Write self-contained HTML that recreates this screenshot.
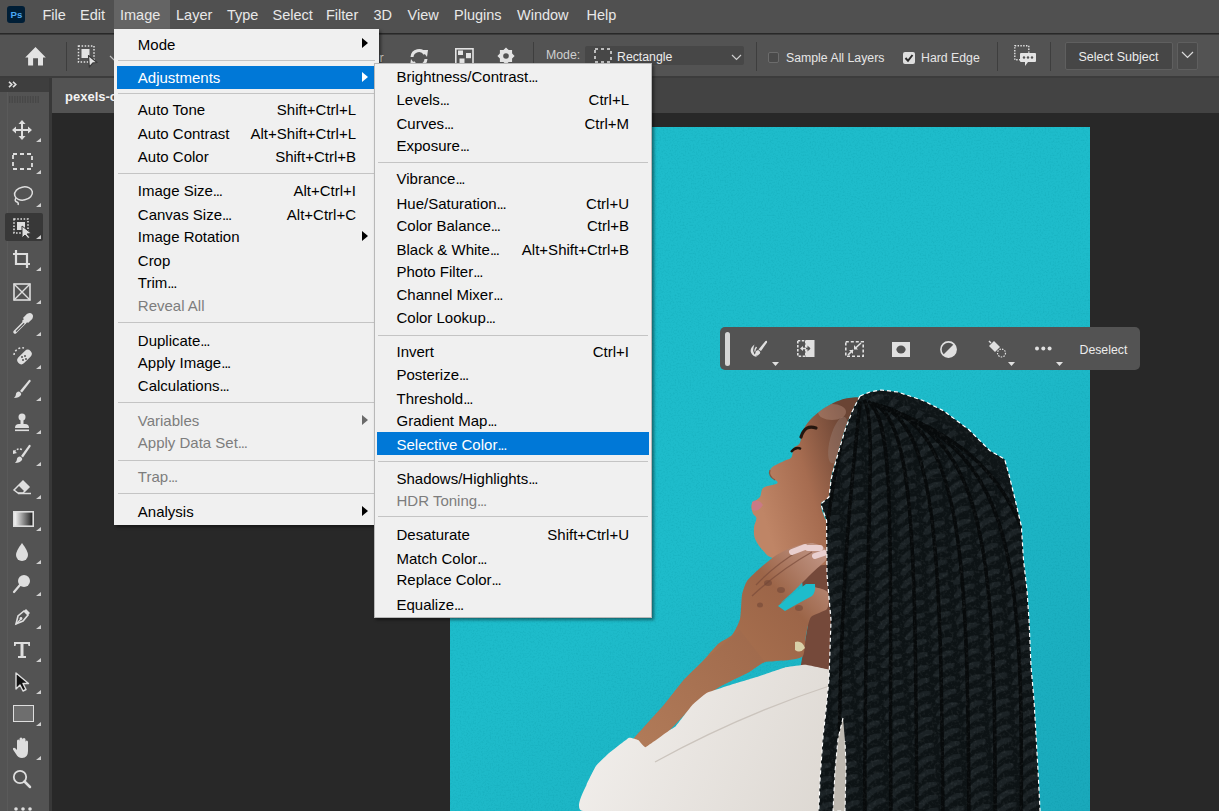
<!DOCTYPE html>
<html><head><meta charset="utf-8"><style>
html,body{margin:0;padding:0;width:1219px;height:811px;overflow:hidden;background:#282828;}
.r{position:absolute;display:block;}
.t{position:absolute;white-space:nowrap;font-family:"Liberation Sans",sans-serif;}
</style></head><body>
<div class="r" style="left:0px;top:0px;width:1219px;height:33px;background:#505050;"></div>
<div class="r" style="left:0px;top:33.5px;width:1219px;height:1.5px;background:#3b3b3b;"></div>
<div class="r" style="left:0px;top:35px;width:1219px;height:41px;background:#535353;"></div>
<div class="r" style="left:0px;top:76px;width:1219px;height:2px;background:#3c3c3c;"></div>
<div class="r" style="left:0px;top:78px;width:1219px;height:35px;background:#434343;"></div>
<div class="r" style="left:0px;top:113px;width:1219px;height:698px;background:#282828;"></div>
<div class="r" style="left:0px;top:78px;width:49px;height:14px;background:#3e3e3e;"></div>
<div class="r" style="left:0px;top:92px;width:49px;height:719px;background:#535353;"></div>
<div class="r" style="left:7px;top:92px;width:1px;height:719px;background:#5a5a5a;"></div>
<div class="r" style="left:49px;top:78px;width:3px;height:733px;background:#383838;"></div>
<div class="r" style="left:52px;top:78px;width:400px;height:35px;background:#535353;"></div>
<div class="t" style="left:65px;top:90.0px;font-size:13px;line-height:13px;color:#f2f2f2;font-weight:bold;">pexels-cottonbro-5952651.jpg</div>
<svg class="r" style="left:0;top:0" width="1219" height="811" viewBox="0 0 1219 811">
<defs>
<clipPath id="imgclip"><rect x="450" y="127" width="640" height="684"/></clipPath>
<clipPath id="faceclip"><path d="M859.0 397.6 C856.6 396.8 846.5 398.1 840.7 399.9 C834.9 401.6 829.4 404.8 824.3 408.1 C819.2 411.4 813.7 416.1 810.2 419.8 C806.7 423.5 805.0 426.4 803.2 430.3 C801.5 434.2 801.3 440.3 799.7 443.2 C798.1 446.1 795.2 445.5 793.8 447.9 C792.4 450.2 793.0 455.1 791.5 457.3 C790.0 459.5 787.8 459.1 784.5 460.8 C781.2 462.6 774.0 465.3 771.6 467.8 C769.2 470.3 769.4 473.5 770.4 476.0 C771.4 478.5 778.7 481.1 777.5 483.0 C776.3 484.9 766.3 485.4 763.4 487.7 C760.5 490.0 761.8 494.3 759.9 497.0 C758.0 499.7 752.9 501.4 751.7 504.1 C750.5 506.9 752.1 511.2 752.9 513.5 C753.7 515.8 756.2 515.8 756.4 518.1 C756.6 520.4 754.2 524.0 754.0 527.5 C753.8 531.0 753.6 535.3 755.2 539.2 C756.8 543.1 760.5 547.9 763.4 551.0 C766.3 554.1 766.7 556.2 772.8 558.0 C778.9 559.8 790.5 561.3 800.0 562.0 C809.5 562.7 824.8 569.0 830.0 562.0 C835.2 555.0 831.7 527.0 831.0 520.0 C830.3 513.0 827.7 522.7 826.0 520.0 C824.3 517.3 820.5 507.8 821.0 504.0 C821.5 500.2 827.3 501.3 829.0 497.0 C830.7 492.7 829.5 485.3 831.0 478.0 C832.5 470.7 835.7 461.2 838.0 453.0 C840.3 444.8 842.2 437.0 845.0 429.0 C847.8 421.0 852.7 410.2 855.0 405.0 C857.3 399.8 861.4 398.5 859.0 397.6 Z"/></clipPath>
<clipPath id="hairclip"><polygon points="860.0,396.0 870.0,392.0 881.0,390.0 897.7,392.0 922.9,400.5 943.9,411.0 969.0,429.8 979.5,440.3 990.0,450.8 1004.6,459.2 1008.8,473.9 1015.0,499.0 1021.4,526.3 1023.5,560.0 1027.0,590.0 1029.0,620.0 1031.0,666.0 1034.0,700.0 1036.0,735.0 1038.0,770.0 1041.0,830.0 818.0,830.0 820.0,780.0 823.0,737.0 826.0,710.0 829.0,679.0 831.0,620.0 827.0,575.0 826.6,520.5 820.8,504.0 829.0,497.0 831.3,478.3 838.3,452.6 845.4,429.2 852.0,412.0"/></clipPath>
<linearGradient id="skinF" x1="750" y1="470" x2="850" y2="440" gradientUnits="userSpaceOnUse"><stop offset="0" stop-color="#bf8566"/><stop offset="0.5" stop-color="#a66c50"/><stop offset="1" stop-color="#6a4434"/></linearGradient>
<linearGradient id="handG" x1="720" y1="660" x2="830" y2="560" gradientUnits="userSpaceOnUse"><stop offset="0" stop-color="#a9714f"/><stop offset="0.6" stop-color="#9c6548"/><stop offset="1" stop-color="#c09484"/></linearGradient>
<linearGradient id="armG" x1="640" y1="740" x2="760" y2="640" gradientUnits="userSpaceOnUse"><stop offset="0" stop-color="#b07a58"/><stop offset="1" stop-color="#a06a4c"/></linearGradient>
<linearGradient id="shirtG" x1="600" y1="700" x2="840" y2="811" gradientUnits="userSpaceOnUse"><stop offset="0" stop-color="#f1eeeb"/><stop offset="1" stop-color="#dcd7d1"/></linearGradient>
<pattern id="twist" width="26" height="13" patternUnits="userSpaceOnUse" patternTransform="rotate(-4)">
<rect width="26" height="13" fill="#0d1315"/>
<path d="M3 11 Q9 3 19 2" stroke="#1b2225" stroke-width="5.5" fill="none" stroke-linecap="round"/>
</pattern>
<filter id="noise" x="0" y="0" width="100%" height="100%">
<feTurbulence type="fractalNoise" baseFrequency="0.35" numOctaves="2" seed="3"/>
<feColorMatrix type="matrix" values="0 0 0 0 0.55  0 0 0 0 0.6  0 0 0 0 0.62  0 0 0 1.6 -0.75"/>
</filter>
<filter id="tnoise" x="0" y="0" width="100%" height="100%">
<feTurbulence type="fractalNoise" baseFrequency="0.6" numOctaves="2" seed="7"/>
<feColorMatrix type="matrix" values="0 0 0 0 0  0 0 0 0 0.25  0 0 0 0 0.3  0 0 0 1.2 -0.55"/>
</filter>
<linearGradient id="vig" x1="700" y1="300" x2="1090" y2="811" gradientUnits="userSpaceOnUse"><stop offset="0.3" stop-color="#003a60" stop-opacity="0"/><stop offset="1" stop-color="#003a60" stop-opacity="0.15"/></linearGradient>
</defs>
<g clip-path="url(#imgclip)">
<rect x="450" y="127" width="640" height="684" fill="#1ebccb"/>
<rect x="450" y="127" width="640" height="684" filter="url(#tnoise)" opacity="0.35"/>
<rect x="450" y="127" width="640" height="684" fill="url(#vig)"/>
<polygon points="798.0,552.0 832.0,552.0 834.0,670.0 800.0,670.0 808.0,625.0" fill="#75493a"/>
<path d="M859.0 397.6 C856.6 396.8 846.5 398.1 840.7 399.9 C834.9 401.6 829.4 404.8 824.3 408.1 C819.2 411.4 813.7 416.1 810.2 419.8 C806.7 423.5 805.0 426.4 803.2 430.3 C801.5 434.2 801.3 440.3 799.7 443.2 C798.1 446.1 795.2 445.5 793.8 447.9 C792.4 450.2 793.0 455.1 791.5 457.3 C790.0 459.5 787.8 459.1 784.5 460.8 C781.2 462.6 774.0 465.3 771.6 467.8 C769.2 470.3 769.4 473.5 770.4 476.0 C771.4 478.5 778.7 481.1 777.5 483.0 C776.3 484.9 766.3 485.4 763.4 487.7 C760.5 490.0 761.8 494.3 759.9 497.0 C758.0 499.7 752.9 501.4 751.7 504.1 C750.5 506.9 752.1 511.2 752.9 513.5 C753.7 515.8 756.2 515.8 756.4 518.1 C756.6 520.4 754.2 524.0 754.0 527.5 C753.8 531.0 753.6 535.3 755.2 539.2 C756.8 543.1 760.5 547.9 763.4 551.0 C766.3 554.1 766.7 556.2 772.8 558.0 C778.9 559.8 790.5 561.3 800.0 562.0 C809.5 562.7 824.8 569.0 830.0 562.0 C835.2 555.0 831.7 527.0 831.0 520.0 C830.3 513.0 827.7 522.7 826.0 520.0 C824.3 517.3 820.5 507.8 821.0 504.0 C821.5 500.2 827.3 501.3 829.0 497.0 C830.7 492.7 829.5 485.3 831.0 478.0 C832.5 470.7 835.7 461.2 838.0 453.0 C840.3 444.8 842.2 437.0 845.0 429.0 C847.8 421.0 852.7 410.2 855.0 405.0 C857.3 399.8 861.4 398.5 859.0 397.6 Z" fill="url(#skinF)"/>
<g clip-path="url(#faceclip)"><ellipse cx="838" cy="440" rx="8" ry="24" fill="#a08a80" opacity="0.35" transform="rotate(15 838 440)"/><ellipse cx="832" cy="412" rx="14" ry="8" fill="#c9a090" opacity="0.35"/></g>
<path d="M801 437 Q805 424 816 428" stroke="#24160f" stroke-width="3.2" fill="none" stroke-linecap="round"/>
<path d="M791 452 Q796 446 801 449" stroke="#1e120c" stroke-width="2.2" fill="none"/>
<path d="M752 502 Q758 498 763 505 Q758 513 752 510 Z" fill="#c97a85"/>
<path d="M770 470 Q768 476 775 480" stroke="#8a5640" stroke-width="1.2" fill="none"/>
<path d="M812.0 543.0 C809.8 542.9 802.4 544.4 800.0 545.0 C797.6 545.6 790.5 547.9 788.0 549.0 C785.5 550.1 777.9 554.0 775.0 556.0 C772.1 558.0 761.8 566.5 759.0 569.0 C756.2 571.5 748.7 578.4 747.0 581.0 C745.3 583.6 742.7 591.2 742.0 595.0 C741.3 598.8 741.0 615.0 740.0 619.0 C739.0 623.0 734.2 632.5 732.0 635.0 C729.8 637.5 721.0 641.3 718.0 644.0 C715.0 646.7 705.5 658.3 702.0 662.0 C698.5 665.7 686.8 676.7 683.0 681.0 C679.2 685.3 667.8 700.5 664.0 705.0 C660.2 709.5 648.4 722.0 645.0 726.0 C641.6 730.0 629.0 742.8 630.0 745.0 C631.0 747.2 651.1 749.4 655.0 748.0 C658.9 746.6 664.8 735.6 669.0 731.0 C673.2 726.4 691.8 706.5 697.0 702.0 C702.2 697.5 715.8 689.0 721.0 686.0 C726.2 683.0 744.6 674.4 749.0 672.0 C753.4 669.6 761.0 663.2 765.0 662.0 C769.0 660.8 785.2 660.6 789.0 660.0 C792.8 659.4 801.3 658.5 803.0 656.0 C804.7 653.5 805.2 638.9 806.0 635.0 C806.8 631.1 808.9 619.6 811.0 617.0 C813.1 614.4 825.2 611.3 827.0 609.0 C828.8 606.7 829.5 596.0 829.0 594.0 C828.5 592.0 824.4 589.7 822.0 589.0 C819.6 588.3 809.1 585.6 805.0 587.0 C800.9 588.4 782.0 602.7 781.0 603.0 C780.0 603.3 791.9 593.0 795.0 590.0 C798.1 587.0 808.9 576.0 812.0 573.0 C815.1 570.0 824.5 562.1 826.0 560.0 C827.5 557.9 827.4 553.4 827.0 552.0 C826.6 550.6 823.5 546.9 822.0 546.0 C820.5 545.1 814.2 543.1 812.0 543.0 Z" fill="url(#handG)"/>
<path d="M752 596 Q780 570 812 552 M756 585 Q775 565 800 550" stroke="#7a4c3a" stroke-width="1.3" fill="none" opacity="0.7"/><g fill="#6e4436" opacity="0.55"><ellipse cx="768" cy="583" rx="4" ry="3"/><ellipse cx="781" cy="590" rx="4" ry="3"/><ellipse cx="799" cy="608" rx="4" ry="3"/><ellipse cx="760" cy="605" rx="3" ry="2.5"/></g>
<path d="M702.0 662.0 C700.1 663.9 686.8 676.7 683.0 681.0 C679.2 685.3 667.8 700.5 664.0 705.0 C660.2 709.5 648.4 722.0 645.0 726.0 C641.6 730.0 629.0 742.8 630.0 745.0 C631.0 747.2 651.1 749.4 655.0 748.0 C658.9 746.6 664.8 735.6 669.0 731.0 C673.2 726.4 691.8 706.5 697.0 702.0 C702.2 697.5 715.8 689.0 721.0 686.0 C726.2 683.0 744.6 674.4 749.0 672.0 C753.4 669.6 761.0 663.2 765.0 662.0 C769.0 660.8 786.6 660.2 789.0 660.0  L765 662 L740 630 Z" fill="url(#armG)"/>
<path d="M778 606 Q792 594 806 584 L815 584 Q816 592 812 596 Q797 604 785 611 Z" fill="#1ebccb"/>
<path d="M792 552 L805 547 M808 548 L820 548 M815 556 L824 553" stroke="#e9cfcf" stroke-width="6" stroke-linecap="round"/>
<path d="M795 642 Q802 640 805 648 Q800 654 795 650 Z" fill="#d8d0a8"/>
<path d="M583.0 811.0 C572.5 810.0 586.0 786.7 586.5 784.9 C587.0 783.1 595.1 767.2 595.9 766.0 C596.7 764.8 606.4 755.3 607.7 754.2 C609.0 753.1 627.7 738.4 628.9 737.8 C630.1 737.2 637.6 739.7 638.3 740.1 C639.0 740.5 644.2 747.6 645.4 747.2 C646.6 746.8 667.7 731.5 668.9 730.7 C670.1 729.9 675.1 727.0 676.0 726.0 C676.9 725.0 691.3 706.1 692.5 704.8 C693.7 703.5 704.9 693.8 706.6 693.0 C708.3 692.2 732.8 684.3 734.9 683.6 C737.0 682.9 756.3 677.2 758.4 676.5 C760.5 675.8 784.8 667.6 786.7 667.1 C788.6 666.6 803.8 664.6 805.5 664.7 C807.2 664.8 827.2 669.2 829.0 669.5 C830.8 669.8 849.2 666.3 850.0 672.0 C850.8 677.7 860.7 805.4 850.0 811.0 C839.3 816.6 593.5 812.0 583.0 811.0 Z" fill="url(#shirtG)"/>
<path d="M655 762 Q740 715 835 684" stroke="#cbc4bd" stroke-width="1.3" fill="none"/>
<polygon points="860.0,396.0 870.0,392.0 881.0,390.0 897.7,392.0 922.9,400.5 943.9,411.0 969.0,429.8 979.5,440.3 990.0,450.8 1004.6,459.2 1008.8,473.9 1015.0,499.0 1021.4,526.3 1023.5,560.0 1027.0,590.0 1029.0,620.0 1031.0,666.0 1034.0,700.0 1036.0,735.0 1038.0,770.0 1041.0,830.0 818.0,830.0 820.0,780.0 823.0,737.0 826.0,710.0 829.0,679.0 831.0,620.0 827.0,575.0 826.6,520.5 820.8,504.0 829.0,497.0 831.3,478.3 838.3,452.6 845.4,429.2 852.0,412.0" fill="#0f1517"/>
<g clip-path="url(#hairclip)"><path d="M858.0 402.2 C850.0 420.0 824.0 560.0 826.0 830.0" stroke="url(#twist)" stroke-width="23" fill="none"/><path d="M862.0 400.8 C869.0 420.0 850.0 560.0 852.0 830.0" stroke="url(#twist)" stroke-width="23" fill="none"/><path d="M866.0 400.8 C888.0 420.0 876.0 560.0 878.0 830.0" stroke="url(#twist)" stroke-width="23" fill="none"/><path d="M870.0 402.2 C907.0 420.0 902.0 560.0 904.0 830.0" stroke="url(#twist)" stroke-width="23" fill="none"/><path d="M874.0 403.8 C926.0 420.0 928.0 560.0 930.0 830.0" stroke="url(#twist)" stroke-width="23" fill="none"/><path d="M878.0 405.2 C951.0 420.0 954.0 560.0 956.0 830.0" stroke="url(#twist)" stroke-width="23" fill="none"/><path d="M882.0 406.8 C976.0 434.0 982.0 560.0 982.0 830.0" stroke="url(#twist)" stroke-width="23" fill="none"/><path d="M886.0 408.2 C1001.0 448.0 1010.0 560.0 1008.0 830.0" stroke="url(#twist)" stroke-width="23" fill="none"/><path d="M890.0 409.8 C1026.0 462.0 1038.0 560.0 1034.0 830.0" stroke="url(#twist)" stroke-width="23" fill="none"/><path d="M856.0 403.0 C840.5 420.0 811.0 560.0 813.0 830.0" stroke="#070a0b" stroke-width="3.5" fill="none"/><path d="M860.0 401.5 C859.5 420.0 837.0 560.0 839.0 830.0" stroke="#070a0b" stroke-width="3.5" fill="none"/><path d="M864.0 400.0 C878.5 420.0 863.0 560.0 865.0 830.0" stroke="#070a0b" stroke-width="3.5" fill="none"/><path d="M868.0 401.5 C897.5 420.0 889.0 560.0 891.0 830.0" stroke="#070a0b" stroke-width="3.5" fill="none"/><path d="M872.0 403.0 C916.5 420.0 915.0 560.0 917.0 830.0" stroke="#070a0b" stroke-width="3.5" fill="none"/><path d="M876.0 404.5 C938.5 420.0 941.0 560.0 943.0 830.0" stroke="#070a0b" stroke-width="3.5" fill="none"/><path d="M880.0 406.0 C963.5 427.0 968.0 560.0 969.0 830.0" stroke="#070a0b" stroke-width="3.5" fill="none"/><path d="M884.0 407.5 C988.5 441.0 996.0 560.0 995.0 830.0" stroke="#070a0b" stroke-width="3.5" fill="none"/><path d="M888.0 409.0 C1013.5 455.0 1024.0 560.0 1021.0 830.0" stroke="#070a0b" stroke-width="3.5" fill="none"/><path d="M892.0 410.5 C1038.5 469.0 1052.0 560.0 1047.0 830.0" stroke="#070a0b" stroke-width="3.5" fill="none"/><rect x="815" y="385" width="230" height="430" filter="url(#noise)" opacity="0.14"/></g>
<polygon points="843.0,718.0 838.0,739.0 835.0,771.0 833.0,811.0 845.0,811.0 846.0,767.0 845.0,741.0" fill="#bdb8b0"/>
<polygon points="860.0,396.0 870.0,392.0 881.0,390.0 897.7,392.0 922.9,400.5 943.9,411.0 969.0,429.8 979.5,440.3 990.0,450.8 1004.6,459.2 1008.8,473.9 1015.0,499.0 1021.4,526.3 1023.5,560.0 1027.0,590.0 1029.0,620.0 1031.0,666.0 1034.0,700.0 1036.0,735.0 1038.0,770.0 1041.0,830.0 818.0,830.0 820.0,780.0 823.0,737.0 826.0,710.0 829.0,679.0 831.0,620.0 827.0,575.0 826.6,520.5 820.8,504.0 829.0,497.0 831.3,478.3 838.3,452.6 845.4,429.2 852.0,412.0" fill="none" stroke="#ffffff" stroke-width="1.2" stroke-dasharray="4 3"/>
<polyline points="843.0,718.0 838.0,739.0 835.0,771.0 833.0,811.0 845.0,811.0 846.0,767.0 845.0,741.0" fill="none" stroke="#ffffff" stroke-width="1.1" stroke-dasharray="4 3"/>
</g>
</svg>
<div class="r" style="left:114px;top:0px;width:56px;height:30px;background:#646464;"></div>
<div class="t" style="left:42.5px;top:8.0px;font-size:14.5px;line-height:14.5px;color:#e8e8e8;font-weight:normal;">File</div>
<div class="t" style="left:80px;top:8.0px;font-size:14.5px;line-height:14.5px;color:#e8e8e8;font-weight:normal;">Edit</div>
<div class="t" style="left:120px;top:8.0px;font-size:14.5px;line-height:14.5px;color:#e8e8e8;font-weight:normal;">Image</div>
<div class="t" style="left:176px;top:8.0px;font-size:14.5px;line-height:14.5px;color:#e8e8e8;font-weight:normal;">Layer</div>
<div class="t" style="left:227px;top:8.0px;font-size:14.5px;line-height:14.5px;color:#e8e8e8;font-weight:normal;">Type</div>
<div class="t" style="left:272.5px;top:8.0px;font-size:14.5px;line-height:14.5px;color:#e8e8e8;font-weight:normal;">Select</div>
<div class="t" style="left:326px;top:8.0px;font-size:14.5px;line-height:14.5px;color:#e8e8e8;font-weight:normal;">Filter</div>
<div class="t" style="left:373.5px;top:8.0px;font-size:14.5px;line-height:14.5px;color:#e8e8e8;font-weight:normal;">3D</div>
<div class="t" style="left:407.5px;top:8.0px;font-size:14.5px;line-height:14.5px;color:#e8e8e8;font-weight:normal;">View</div>
<div class="t" style="left:454px;top:8.0px;font-size:14.5px;line-height:14.5px;color:#e8e8e8;font-weight:normal;">Plugins</div>
<div class="t" style="left:517px;top:8.0px;font-size:14.5px;line-height:14.5px;color:#e8e8e8;font-weight:normal;">Window</div>
<div class="t" style="left:586.5px;top:8.0px;font-size:14.5px;line-height:14.5px;color:#e8e8e8;font-weight:normal;">Help</div>
<svg class="r" style="left:7px;top:6px;" width="18" height="17" viewBox="0 0 18 17"><rect x="0" y="0" width="18" height="17" rx="3" fill="#001e36"/><text x="3.6" y="12.2" font-family="Liberation Sans" font-weight="bold" font-size="9.6" fill="#4aa8f5">Ps</text></svg>
<svg class="r" style="left:25px;top:47px;" width="22" height="20" viewBox="0 0 22 20"><path d="M10.5 0 L20.8 10.5 L18 10.5 L18 18.6 L13 18.6 L13 11.2 L8.1 11.2 L8.1 18.6 L3.1 18.6 L3.1 10.5 L0.2 10.5 Z" fill="#e3e3e3"/></svg>
<div class="r" style="left:66px;top:42px;width:1px;height:29px;background:#3e3e3e;"></div>
<svg class="r" style="left:77px;top:45px;" width="22" height="23" viewBox="0 0 22 23"><rect x="1.5" y="1" width="15.5" height="16" fill="none" stroke="#e3e3e3" stroke-width="1.5" stroke-dasharray="1.5 1.6"/><rect x="4.5" y="4" width="8" height="9" fill="#e3e3e3"/><path d="M11.5 10.5 L20 17.5 L16 17.8 L12.3 22 Z" fill="#e3e3e3" stroke="#3a3a3a" stroke-width="1.2" stroke-linejoin="round"/></svg>
<svg class="r" style="left:109px;top:55px;" width="10" height="7" viewBox="0 0 10 7"><path d="M1 1 L5 5 L9 1" fill="none" stroke="#bdbdbd" stroke-width="1.2"/></svg>
<svg class="r" style="left:408px;top:46.5px;" width="22" height="22" viewBox="0 0 22 22"><path d="M4 10 A7 7 0 0 1 17 7" fill="none" stroke="#e3e3e3" stroke-width="3"/><path d="M14 3 L20 3 L19 10 Z" fill="#e3e3e3"/><path d="M18 12 A7 7 0 0 1 5 15" fill="none" stroke="#e3e3e3" stroke-width="3"/><path d="M8 19 L2 19 L3 12 Z" fill="#e3e3e3"/></svg>
<svg class="r" style="left:455px;top:48px;" width="19" height="18" viewBox="0 0 19 18"><rect x="0.8" y="0.8" width="17.2" height="17" fill="none" stroke="#e3e3e3" stroke-width="1.6"/><rect x="3" y="2.5" width="5" height="4.5" fill="#e3e3e3"/><rect x="11" y="5" width="5" height="5.2" fill="#e3e3e3"/><rect x="4.5" y="10.5" width="5" height="4.5" fill="#e3e3e3"/></svg>
<svg class="r" style="left:496px;top:46px;" width="20" height="20" viewBox="0 0 20 20"><g transform="translate(10,10)"><polygon points="8.60,0.00 6.10,2.53 6.08,6.08 2.53,6.10 0.00,8.60 -2.53,6.10 -6.08,6.08 -6.10,2.53 -8.60,0.00 -6.10,-2.53 -6.08,-6.08 -2.53,-6.10 -0.00,-8.60 2.53,-6.10 6.08,-6.08 6.10,-2.53" fill="#e3e3e3"/><circle r="6.5" fill="#e3e3e3"/><circle r="2.8" fill="#535353"/></g></svg>
<div class="r" style="left:533px;top:42px;width:1px;height:29px;background:#3e3e3e;"></div>
<div class="t" style="left:379.5px;top:51.9px;font-size:12.3px;line-height:12.3px;color:#d8d8d8;font-weight:normal;">r</div>
<div class="t" style="left:546px;top:49.4px;font-size:12.3px;line-height:12.3px;color:#cfcfcf;font-weight:normal;">Mode:</div>
<div class="r" style="left:585px;top:46px;width:159px;height:19px;background:#474747;border-radius:2px"></div>
<svg class="r" style="left:594px;top:48px;" width="19" height="15" viewBox="0 0 19 15"><rect x="1" y="1" width="16" height="13" fill="none" stroke="#e3e3e3" stroke-width="1.5" stroke-dasharray="3 3"/></svg>
<div class="t" style="left:617px;top:51.4px;font-size:12.3px;line-height:12.3px;color:#ececec;font-weight:normal;">Rectangle</div>
<svg class="r" style="left:731px;top:54px;" width="11" height="7" viewBox="0 0 11 7"><path d="M1 1 L5.5 5.5 L10 1" fill="none" stroke="#cfcfcf" stroke-width="1.2"/></svg>
<div class="r" style="left:756px;top:42px;width:1px;height:29px;background:#3e3e3e;"></div>
<div class="r" style="left:768px;top:52px;width:11px;height:11px;background:#4a4a4a;border:1px solid #6c6c6c;border-radius:2px;box-sizing:border-box"></div>
<div class="t" style="left:786px;top:52.4px;font-size:12.3px;line-height:12.3px;color:#e6e6e6;font-weight:normal;">Sample All Layers</div>
<svg class="r" style="left:903px;top:52px;" width="12" height="12" viewBox="0 0 12 12"><rect x="0" y="0" width="12" height="12" rx="2" fill="#dedede"/><path d="M2.5 6 L5 8.8 L9.5 3" fill="none" stroke="#2a2a2a" stroke-width="2"/></svg>
<div class="t" style="left:921px;top:52.4px;font-size:12.3px;line-height:12.3px;color:#e6e6e6;font-weight:normal;">Hard Edge</div>
<div class="r" style="left:997px;top:42px;width:1px;height:29px;background:#3e3e3e;"></div>
<svg class="r" style="left:1014px;top:45px;" width="23" height="23" viewBox="0 0 23 23"><rect x="0.8" y="0.8" width="14" height="14" fill="none" stroke="#e3e3e3" stroke-width="1.4" stroke-dasharray="1.4 1.4"/><path d="M7 8 L21 8 Q22 8 22 9 L22 16 Q22 17 21 17 L14 17 L11 21 L11 17 L7 17 Q6 17 6 16 L6 9 Q6 8 7 8 Z" fill="#e3e3e3"/><circle cx="10" cy="12.5" r="1.2" fill="#535353"/><circle cx="14" cy="12.5" r="1.2" fill="#535353"/><circle cx="18" cy="12.5" r="1.2" fill="#535353"/></svg>
<div class="r" style="left:1050px;top:42px;width:1px;height:29px;background:#3e3e3e;"></div>
<div class="r" style="left:1065px;top:42px;width:108px;height:28px;background:#464646;border:1px solid #5f5f5f;border-radius:2px;box-sizing:border-box"></div>
<div class="t" style="left:1078.5px;top:51.0px;font-size:12.5px;line-height:12.5px;color:#ececec;font-weight:normal;">Select Subject</div>
<div class="r" style="left:1177px;top:42px;width:21px;height:28px;background:#4a4a4a;border:1px solid #5f5f5f;border-radius:2px;box-sizing:border-box"></div>
<svg class="r" style="left:1181px;top:51px;" width="13" height="8" viewBox="0 0 13 8"><path d="M1 1 L6.5 6.5 L12 1" fill="none" stroke="#dcdcdc" stroke-width="1.2"/></svg>
<div class="r" style="left:5px;top:213px;width:38px;height:28px;background:#383838;border-radius:2px"></div>
<svg class="r" style="left:10px;top:118px;" width="24" height="24" viewBox="0 0 24 24"><g stroke="#dedede" stroke-width="2" fill="none"><path d="M12 4 L12 20 M4 12 L20 12"/></g><g fill="#dedede"><path d="M12 2 L15.5 6 L8.5 6 Z M12 22 L15.5 18 L8.5 18 Z M2 12 L6 8.5 L6 15.5 Z M22 12 L18 8.5 L18 15.5 Z"/></g></svg>
<svg class="r" style="left:10px;top:150px;" width="24" height="24" viewBox="0 0 24 24"><rect x="3" y="4" width="19" height="15" fill="none" stroke="#dedede" stroke-width="1.8" stroke-dasharray="4 3"/></svg>
<svg class="r" style="left:10px;top:183px;" width="24" height="24" viewBox="0 0 24 24"><ellipse cx="13.5" cy="10.5" rx="9" ry="6.5" fill="none" stroke="#dedede" stroke-width="1.5" transform="rotate(-12 13.5 10.5)"/><path d="M6 15 Q4 18 7 19 Q9 20 8 22" fill="none" stroke="#dedede" stroke-width="1.5"/></svg>
<svg class="r" style="left:10px;top:215px;" width="24" height="24" viewBox="0 0 24 24"><rect x="4" y="4" width="14" height="14" fill="none" stroke="#dedede" stroke-width="1.6" stroke-dasharray="1.6 1.6"/><rect x="7" y="7" width="8" height="8" fill="#dedede"/><path d="M12 11 L12 23 L15 20 L18 23.5 L20 22.5 L17 19 L21.5 18.5 Z" fill="#dedede" stroke="#383838" stroke-width="1"/></svg>
<svg class="r" style="left:10px;top:247px;" width="24" height="24" viewBox="0 0 24 24"><path d="M6 3 L6 17 L20 17 M3 7 L17 7 L17 21" fill="none" stroke="#dedede" stroke-width="2.2"/></svg>
<svg class="r" style="left:10px;top:280px;" width="24" height="24" viewBox="0 0 24 24"><rect x="4" y="4" width="16" height="16" fill="none" stroke="#dedede" stroke-width="1.6"/><path d="M4 4 L20 20 M20 4 L4 20" stroke="#dedede" stroke-width="1.4"/></svg>
<svg class="r" style="left:10px;top:312px;" width="24" height="24" viewBox="0 0 24 24"><path d="M5 20 L15 10" stroke="#dedede" stroke-width="3.5" stroke-linecap="round" fill="none"/><path d="M6 19.5 L14.5 11" stroke="#535353" stroke-width="1.3" fill="none"/><path d="M13 8 L16 11 M15 6 L18 3 Q20 2 21 3 Q22 4 21 6 L18 9 Z" stroke="#dedede" stroke-width="3" fill="#dedede"/></svg>
<svg class="r" style="left:10px;top:345px;" width="24" height="24" viewBox="0 0 24 24"><path d="M4 10 A8 8 0 0 1 14 3" stroke="#dedede" stroke-width="1.5" stroke-dasharray="2 2" fill="none"/><rect x="6" y="8" width="17" height="8" rx="4" fill="#dedede" transform="rotate(-45 14.5 12)"/><g fill="#535353"><circle cx="12" cy="12" r="1"/><circle cx="15" cy="11" r="1"/><circle cx="13" cy="15" r="1"/><circle cx="16" cy="14" r="1"/></g></svg>
<svg class="r" style="left:10px;top:377px;" width="24" height="24" viewBox="0 0 24 24"><path d="M10 14 L19 3 Q21 2 20.5 4.5 L12 15.5 Z" fill="#dedede"/><path d="M9 14.5 Q12 16 11 18 Q9 21 4 21 Q6 19 6 17 Q6 15 9 14.5 Z" fill="#dedede"/></svg>
<svg class="r" style="left:10px;top:410px;" width="24" height="24" viewBox="0 0 24 24"><circle cx="12" cy="7" r="3.5" fill="#dedede"/><rect x="10.5" y="9" width="3" height="5" fill="#dedede"/><path d="M5 18 Q5 14 9 14 L15 14 Q19 14 19 18 Z" fill="#dedede"/><rect x="5" y="19.5" width="14" height="1.6" fill="#dedede"/></svg>
<svg class="r" style="left:10px;top:442px;" width="24" height="24" viewBox="0 0 24 24"><path d="M11 14 L19 3 Q21 2 20.5 4.5 L13 15.5 Z" fill="#dedede"/><path d="M10 14.5 Q13 16 12 18 Q10 21 5 21 Q7 19 7 17 Q7 15 10 14.5 Z" fill="#dedede"/><path d="M4 10 Q8 5 13 8" stroke="#dedede" stroke-width="1.5" fill="none" stroke-dasharray="2 1.5"/><path d="M3 8 L7 11 L3 12 Z" fill="#dedede"/></svg>
<svg class="r" style="left:10px;top:475px;" width="24" height="24" viewBox="0 0 24 24"><path d="M4 15 L13 6 L19 12 L13 18 L8 18 Z" fill="none" stroke="#dedede" stroke-width="1.5"/><path d="M8.5 10.5 L13 6 L19 12 L14.5 16.5 Z" fill="#dedede"/><path d="M8 18.5 L21 18.5" stroke="#dedede" stroke-width="1.5"/></svg>
<svg class="r" style="left:13px;top:511px" width="21" height="16" viewBox="0 0 21 16"><defs><linearGradient id="gg" x1="0" y1="0" x2="1" y2="0"><stop offset="0" stop-color="#ffffff"/><stop offset="1" stop-color="#1a1a1a"/></linearGradient></defs><rect x="0.8" y="0.8" width="19.4" height="14.4" fill="url(#gg)" stroke="#dedede" stroke-width="1.6"/></svg>
<svg class="r" style="left:10px;top:540px;" width="24" height="24" viewBox="0 0 24 24"><path d="M12 3 Q18 11 18 15 A6 6 0 0 1 6 15 Q6 11 12 3 Z" fill="#dedede"/></svg>
<svg class="r" style="left:10px;top:572px;" width="24" height="24" viewBox="0 0 24 24"><circle cx="14" cy="9" r="6" fill="#dedede"/><path d="M10 13 L4 20" stroke="#dedede" stroke-width="2.2" stroke-linecap="round"/></svg>
<svg class="r" style="left:10px;top:605px;" width="24" height="24" viewBox="0 0 24 24"><path d="M6 19 L8 11 L14 6 L18 10 L13 16 Z" fill="none" stroke="#dedede" stroke-width="1.6"/><path d="M14 6 L16 4 L20 8 L18 10 Z" fill="#dedede"/><path d="M6 19 L11 14" stroke="#dedede" stroke-width="1.2"/><circle cx="11" cy="13.5" r="1.4" fill="#dedede"/></svg>
<svg class="r" style="left:10px;top:638px;" width="24" height="24" viewBox="0 0 24 24"><path d="M4 4 L20 4 L20 8 L18.5 8 L18 6 L13.5 6 L13.5 18 L16 18 L16 20 L8 20 L8 18 L10.5 18 L10.5 6 L6 6 L5.5 8 L4 8 Z" fill="#dedede"/></svg>
<svg class="r" style="left:10px;top:670px;" width="24" height="24" viewBox="0 0 24 24"><path d="M6 3 L6 19 L10 15 L13 21 L16 19.5 L13 13.5 L18.5 13.5 Z" fill="#111" stroke="#dedede" stroke-width="1.4" stroke-linejoin="round"/></svg>
<div class="r" style="left:13px;top:705px;width:21px;height:17px;background:#6e6e6e;border:1.6px solid #dedede;box-sizing:border-box"></div>
<svg class="r" style="left:10px;top:736px;" width="24" height="24" viewBox="0 0 24 24"><path d="M7 12 L7 5 Q7 3.5 8.3 3.5 Q9.5 3.5 9.5 5 L9.5 10 L9.5 3 Q9.5 1.5 11 1.5 Q12.5 1.5 12.5 3 L12.5 10 L12.5 3.5 Q12.5 2 14 2 Q15.5 2 15.5 3.5 L15.5 10.5 L15.5 6 Q15.5 4.5 16.8 4.5 Q18 4.5 18 6 L18 15 Q18 22 12 22 Q8 22 6 18 L3 13.5 Q2.5 12 4 11.8 Q5 11.7 7 14 Z" fill="#dedede"/></svg>
<svg class="r" style="left:10px;top:767px;" width="24" height="24" viewBox="0 0 24 24"><circle cx="10" cy="10" r="6.2" fill="none" stroke="#dedede" stroke-width="1.8"/><path d="M14.5 14.5 L20 20" stroke="#dedede" stroke-width="2.5" stroke-linecap="round"/></svg>
<svg class="r" style="left:13px;top:806px;" width="20" height="5" viewBox="0 0 20 5"><circle cx="3" cy="3" r="1.8" fill="#dedede"/><circle cx="10" cy="3" r="1.8" fill="#dedede"/><circle cx="17" cy="3" r="1.8" fill="#dedede"/></svg>
<svg class="r" style="left:36px;top:138px;" width="5" height="4" viewBox="0 0 5 4"><path d="M5 0 L5 4 L0 4 Z" fill="#cfcfcf"/></svg>
<svg class="r" style="left:36px;top:170px;" width="5" height="4" viewBox="0 0 5 4"><path d="M5 0 L5 4 L0 4 Z" fill="#cfcfcf"/></svg>
<svg class="r" style="left:36px;top:203px;" width="5" height="4" viewBox="0 0 5 4"><path d="M5 0 L5 4 L0 4 Z" fill="#cfcfcf"/></svg>
<svg class="r" style="left:36px;top:235px;" width="5" height="4" viewBox="0 0 5 4"><path d="M5 0 L5 4 L0 4 Z" fill="#cfcfcf"/></svg>
<svg class="r" style="left:36px;top:267px;" width="5" height="4" viewBox="0 0 5 4"><path d="M5 0 L5 4 L0 4 Z" fill="#cfcfcf"/></svg>
<svg class="r" style="left:36px;top:300px;" width="5" height="4" viewBox="0 0 5 4"><path d="M5 0 L5 4 L0 4 Z" fill="#cfcfcf"/></svg>
<svg class="r" style="left:36px;top:332px;" width="5" height="4" viewBox="0 0 5 4"><path d="M5 0 L5 4 L0 4 Z" fill="#cfcfcf"/></svg>
<svg class="r" style="left:36px;top:365px;" width="5" height="4" viewBox="0 0 5 4"><path d="M5 0 L5 4 L0 4 Z" fill="#cfcfcf"/></svg>
<svg class="r" style="left:36px;top:397px;" width="5" height="4" viewBox="0 0 5 4"><path d="M5 0 L5 4 L0 4 Z" fill="#cfcfcf"/></svg>
<svg class="r" style="left:36px;top:430px;" width="5" height="4" viewBox="0 0 5 4"><path d="M5 0 L5 4 L0 4 Z" fill="#cfcfcf"/></svg>
<svg class="r" style="left:36px;top:462px;" width="5" height="4" viewBox="0 0 5 4"><path d="M5 0 L5 4 L0 4 Z" fill="#cfcfcf"/></svg>
<svg class="r" style="left:36px;top:495px;" width="5" height="4" viewBox="0 0 5 4"><path d="M5 0 L5 4 L0 4 Z" fill="#cfcfcf"/></svg>
<svg class="r" style="left:36px;top:527px;" width="5" height="4" viewBox="0 0 5 4"><path d="M5 0 L5 4 L0 4 Z" fill="#cfcfcf"/></svg>
<svg class="r" style="left:36px;top:560px;" width="5" height="4" viewBox="0 0 5 4"><path d="M5 0 L5 4 L0 4 Z" fill="#cfcfcf"/></svg>
<svg class="r" style="left:36px;top:592px;" width="5" height="4" viewBox="0 0 5 4"><path d="M5 0 L5 4 L0 4 Z" fill="#cfcfcf"/></svg>
<svg class="r" style="left:36px;top:625px;" width="5" height="4" viewBox="0 0 5 4"><path d="M5 0 L5 4 L0 4 Z" fill="#cfcfcf"/></svg>
<svg class="r" style="left:36px;top:658px;" width="5" height="4" viewBox="0 0 5 4"><path d="M5 0 L5 4 L0 4 Z" fill="#cfcfcf"/></svg>
<svg class="r" style="left:36px;top:690px;" width="5" height="4" viewBox="0 0 5 4"><path d="M5 0 L5 4 L0 4 Z" fill="#cfcfcf"/></svg>
<svg class="r" style="left:36px;top:722px;" width="5" height="4" viewBox="0 0 5 4"><path d="M5 0 L5 4 L0 4 Z" fill="#cfcfcf"/></svg>
<svg class="r" style="left:36px;top:756px;" width="5" height="4" viewBox="0 0 5 4"><path d="M5 0 L5 4 L0 4 Z" fill="#cfcfcf"/></svg>
<svg class="r" style="left:8px;top:81px;" width="9" height="7" viewBox="0 0 9 7"><path d="M1 0.8 L3.8 3.5 L1 6.2 M5 0.8 L7.8 3.5 L5 6.2" fill="none" stroke="#e0e0e0" stroke-width="1.6"/></svg>
<svg class="r" style="left:9px;top:96px;" width="31" height="8" viewBox="0 0 31 8"><rect x="0.0" y="0" width="1.3" height="7" fill="#474747"/><rect x="2.6" y="0" width="1.3" height="7" fill="#474747"/><rect x="5.2" y="0" width="1.3" height="7" fill="#474747"/><rect x="7.8" y="0" width="1.3" height="7" fill="#474747"/><rect x="10.4" y="0" width="1.3" height="7" fill="#474747"/><rect x="13.0" y="0" width="1.3" height="7" fill="#474747"/><rect x="15.6" y="0" width="1.3" height="7" fill="#474747"/><rect x="18.2" y="0" width="1.3" height="7" fill="#474747"/><rect x="20.8" y="0" width="1.3" height="7" fill="#474747"/><rect x="23.4" y="0" width="1.3" height="7" fill="#474747"/><rect x="26.0" y="0" width="1.3" height="7" fill="#474747"/><rect x="28.6" y="0" width="1.3" height="7" fill="#474747"/></svg>
<div class="r" style="left:720px;top:327px;width:420px;height:43px;background:#535353;border-radius:5px"></div>
<div class="r" style="left:725px;top:332px;width:5px;height:34px;background:#d6d6d6;border-radius:3px"></div>
<svg class="r" style="left:750px;top:340px;" width="18" height="17" viewBox="0 0 18 17"><path d="M8.5 9.5 L15.5 1 Q17.5 0 17 2.5 L11 11 Z" fill="#e0e0e0"/><path d="M8 10 Q11 11.5 10 13.5 Q8 16.5 3.5 16 Q5.5 14 5.5 12.5 Q5.5 10.5 8 10 Z" fill="#e0e0e0"/><path d="M4.5 4.5 Q-0.5 8.5 1 12.5 Q2.5 16.5 7 16.8 Q3.5 14 3.2 11 Q3 8 4.5 4.5 Z" fill="#e0e0e0"/><path d="M6.5 7 Q4.5 9.5 5 11.5" stroke="#e0e0e0" stroke-width="1.4" fill="none"/></svg>
<svg class="r" style="left:772px;top:362px;" width="7" height="4" viewBox="0 0 7 4"><path d="M0 0 L7 0 L3.5 4 Z" fill="#e0e0e0"/></svg>
<svg class="r" style="left:797px;top:340px;" width="18" height="17" viewBox="0 0 18 17"><rect x="0.8" y="0.8" width="8" height="15.4" fill="none" stroke="#e0e0e0" stroke-width="1.6" stroke-dasharray="2.5 1.5"/><rect x="8.5" y="0" width="9" height="17" fill="#e0e0e0"/><path d="M3 8.5 L13 8.5" stroke="#535353" stroke-width="1.6"/><path d="M13.5 8.5 L10.5 5.5 L10.5 11.5 Z" fill="#535353"/><path d="M3 8.5 L6 6 L6 11 Z" fill="#e0e0e0"/><path d="M6 8.5 L9 8.5" stroke="#e0e0e0" stroke-width="1.6"/></svg>
<svg class="r" style="left:845px;top:341px;" width="19" height="16" viewBox="0 0 19 16"><rect x="0.8" y="0.8" width="17.4" height="14.4" fill="none" stroke="#e0e0e0" stroke-width="1.6" stroke-dasharray="3 2"/><path d="M16 2 L10 7.5 M3 14 L8 9" stroke="#e0e0e0" stroke-width="1.6"/><path d="M9 8.5 L9 4 L13 8.5 Z M8 9 L8 13 L4 9 Z" fill="#e0e0e0"/></svg>
<svg class="r" style="left:892px;top:342px;" width="18" height="15" viewBox="0 0 18 15"><rect x="0" y="0" width="18" height="15" fill="#e0e0e0"/><ellipse cx="9" cy="7.5" rx="4.6" ry="4" fill="#535353"/></svg>
<svg class="r" style="left:940px;top:341px;" width="17" height="17" viewBox="0 0 17 17"><circle cx="8.5" cy="8.5" r="7.6" fill="none" stroke="#e0e0e0" stroke-width="1.6"/><path d="M14 3 A7.6 7.6 0 0 1 3 14 Z" fill="#e0e0e0"/></svg>
<svg class="r" style="left:987px;top:340px;" width="20" height="18" viewBox="0 0 20 18"><path d="M2 6 L7 1 L13 7 L8 12 Z" fill="#e0e0e0"/><path d="M4 3 L2 1" stroke="#e0e0e0" stroke-width="1.5"/><circle cx="14.5" cy="13" r="4" fill="none" stroke="#e0e0e0" stroke-width="1.2" stroke-dasharray="1.5 1.2"/></svg>
<svg class="r" style="left:1008px;top:362px;" width="7" height="4" viewBox="0 0 7 4"><path d="M0 0 L7 0 L3.5 4 Z" fill="#e0e0e0"/></svg>
<svg class="r" style="left:1034px;top:345px;" width="19" height="7" viewBox="0 0 19 7"><circle cx="3.0" cy="3.5" r="2" fill="#e0e0e0"/><circle cx="9.3" cy="3.5" r="2" fill="#e0e0e0"/><circle cx="15.6" cy="3.5" r="2" fill="#e0e0e0"/></svg>
<svg class="r" style="left:1056px;top:362px;" width="7" height="4" viewBox="0 0 7 4"><path d="M0 0 L7 0 L3.5 4 Z" fill="#e0e0e0"/></svg>
<div class="t" style="left:1079.5px;top:344.4px;font-size:12.3px;line-height:12.3px;color:#ececec;font-weight:normal;">Deselect</div>
<div class="r" style="left:114px;top:29px;width:265px;height:496px;background:#f0f0f0;box-shadow:2px 2px 3px rgba(0,0,0,0.45)"></div>
<div class="t" style="left:137.8px;top:36.5px;font-size:15px;line-height:15px;color:#000000;font-weight:normal;">Mode</div>
<svg class="r" style="left:362px;top:38px;" width="6" height="10" viewBox="0 0 6 10"><path d="M0 0 L6 5 L0 10 Z" fill="#000"/></svg>
<div class="r" style="left:118px;top:60px;width:257px;height:1px;background:#c4c4c4;"></div>
<div class="r" style="left:117px;top:66px;width:259px;height:23px;background:#0078d7;"></div>
<div class="t" style="left:137.8px;top:70.1px;font-size:15px;line-height:15px;color:#ffffff;font-weight:normal;">Adjustments</div>
<svg class="r" style="left:362px;top:72px;" width="6" height="10" viewBox="0 0 6 10"><path d="M0 0 L6 5 L0 10 Z" fill="#ffffff"/></svg>
<div class="r" style="left:118px;top:93px;width:257px;height:1px;background:#c4c4c4;"></div>
<div class="t" style="left:137.8px;top:102.3px;font-size:15px;line-height:15px;color:#000000;font-weight:normal;">Auto Tone</div>
<div class="t" style="right:863px;top:102.3px;font-size:15px;line-height:15px;color:#000000;font-weight:normal;">Shift+Ctrl+L</div>
<div class="t" style="left:137.8px;top:126.4px;font-size:15px;line-height:15px;color:#000000;font-weight:normal;">Auto Contrast</div>
<div class="t" style="right:863px;top:126.4px;font-size:15px;line-height:15px;color:#000000;font-weight:normal;">Alt+Shift+Ctrl+L</div>
<div class="t" style="left:137.8px;top:148.8px;font-size:15px;line-height:15px;color:#000000;font-weight:normal;">Auto Color</div>
<div class="t" style="right:863px;top:148.8px;font-size:15px;line-height:15px;color:#000000;font-weight:normal;">Shift+Ctrl+B</div>
<div class="r" style="left:118px;top:173px;width:257px;height:1px;background:#c4c4c4;"></div>
<div class="t" style="left:137.8px;top:183.1px;font-size:15px;line-height:15px;color:#000000;font-weight:normal;">Image Size<span style="letter-spacing:-1.2px">...</span></div>
<div class="t" style="right:863px;top:183.1px;font-size:15px;line-height:15px;color:#000000;font-weight:normal;">Alt+Ctrl+I</div>
<div class="t" style="left:137.8px;top:206.6px;font-size:15px;line-height:15px;color:#000000;font-weight:normal;">Canvas Size<span style="letter-spacing:-1.2px">...</span></div>
<div class="t" style="right:863px;top:206.6px;font-size:15px;line-height:15px;color:#000000;font-weight:normal;">Alt+Ctrl+C</div>
<div class="t" style="left:137.8px;top:229.4px;font-size:15px;line-height:15px;color:#000000;font-weight:normal;">Image Rotation</div>
<svg class="r" style="left:362px;top:231px;" width="6" height="10" viewBox="0 0 6 10"><path d="M0 0 L6 5 L0 10 Z" fill="#000"/></svg>
<div class="t" style="left:137.8px;top:252.5px;font-size:15px;line-height:15px;color:#000000;font-weight:normal;">Crop</div>
<div class="t" style="left:137.8px;top:274.8px;font-size:15px;line-height:15px;color:#000000;font-weight:normal;">Trim<span style="letter-spacing:-1.2px">...</span></div>
<div class="t" style="left:137.8px;top:297.9px;font-size:15px;line-height:15px;color:#7d7d7d;font-weight:normal;">Reveal All</div>
<div class="r" style="left:118px;top:322px;width:257px;height:1px;background:#c4c4c4;"></div>
<div class="t" style="left:137.8px;top:332.9px;font-size:15px;line-height:15px;color:#000000;font-weight:normal;">Duplicate<span style="letter-spacing:-1.2px">...</span></div>
<div class="t" style="left:137.8px;top:354.8px;font-size:15px;line-height:15px;color:#000000;font-weight:normal;">Apply Image<span style="letter-spacing:-1.2px">...</span></div>
<div class="t" style="left:137.8px;top:377.9px;font-size:15px;line-height:15px;color:#000000;font-weight:normal;">Calculations<span style="letter-spacing:-1.2px">...</span></div>
<div class="r" style="left:118px;top:402px;width:257px;height:1px;background:#c4c4c4;"></div>
<div class="t" style="left:137.8px;top:413.3px;font-size:15px;line-height:15px;color:#7d7d7d;font-weight:normal;">Variables</div>
<svg class="r" style="left:362px;top:415px;" width="6" height="10" viewBox="0 0 6 10"><path d="M0 0 L6 5 L0 10 Z" fill="#6a6a6a"/></svg>
<div class="t" style="left:137.8px;top:434.5px;font-size:15px;line-height:15px;color:#7d7d7d;font-weight:normal;">Apply Data Set<span style="letter-spacing:-1.2px">...</span></div>
<div class="r" style="left:118px;top:460px;width:257px;height:1px;background:#c4c4c4;"></div>
<div class="t" style="left:137.8px;top:468.9px;font-size:15px;line-height:15px;color:#7d7d7d;font-weight:normal;">Trap<span style="letter-spacing:-1.2px">...</span></div>
<div class="r" style="left:118px;top:493px;width:257px;height:1px;background:#c4c4c4;"></div>
<div class="t" style="left:137.8px;top:503.7px;font-size:15px;line-height:15px;color:#000000;font-weight:normal;">Analysis</div>
<svg class="r" style="left:362px;top:506px;" width="6" height="10" viewBox="0 0 6 10"><path d="M0 0 L6 5 L0 10 Z" fill="#000"/></svg>
<div class="r" style="left:374px;top:63px;width:278px;height:555px;background:#f0f0f0;box-shadow:2px 2px 3px rgba(0,0,0,0.45);border:1px solid #b8b8b8;box-sizing:border-box"></div>
<div class="t" style="left:396.5px;top:68.8px;font-size:15px;line-height:15px;color:#000000;font-weight:normal;">Brightness/Contrast<span style="letter-spacing:-1.2px">...</span></div>
<div class="t" style="left:396.5px;top:91.5px;font-size:15px;line-height:15px;color:#000000;font-weight:normal;">Levels<span style="letter-spacing:-1.2px">...</span></div>
<div class="t" style="right:590px;top:91.5px;font-size:15px;line-height:15px;color:#000000;font-weight:normal;">Ctrl+L</div>
<div class="t" style="left:396.5px;top:115.7px;font-size:15px;line-height:15px;color:#000000;font-weight:normal;">Curves<span style="letter-spacing:-1.2px">...</span></div>
<div class="t" style="right:590px;top:115.7px;font-size:15px;line-height:15px;color:#000000;font-weight:normal;">Ctrl+M</div>
<div class="t" style="left:396.5px;top:137.7px;font-size:15px;line-height:15px;color:#000000;font-weight:normal;">Exposure<span style="letter-spacing:-1.2px">...</span></div>
<div class="r" style="left:378px;top:162px;width:270px;height:1px;background:#c4c4c4;"></div>
<div class="t" style="left:396.5px;top:171.1px;font-size:15px;line-height:15px;color:#000000;font-weight:normal;">Vibrance<span style="letter-spacing:-1.2px">...</span></div>
<div class="t" style="left:396.5px;top:195.5px;font-size:15px;line-height:15px;color:#000000;font-weight:normal;">Hue/Saturation<span style="letter-spacing:-1.2px">...</span></div>
<div class="t" style="right:590px;top:195.5px;font-size:15px;line-height:15px;color:#000000;font-weight:normal;">Ctrl+U</div>
<div class="t" style="left:396.5px;top:217.7px;font-size:15px;line-height:15px;color:#000000;font-weight:normal;">Color Balance<span style="letter-spacing:-1.2px">...</span></div>
<div class="t" style="right:590px;top:217.7px;font-size:15px;line-height:15px;color:#000000;font-weight:normal;">Ctrl+B</div>
<div class="t" style="left:396.5px;top:241.7px;font-size:15px;line-height:15px;color:#000000;font-weight:normal;">Black &amp; White<span style="letter-spacing:-1.2px">...</span></div>
<div class="t" style="right:590px;top:241.7px;font-size:15px;line-height:15px;color:#000000;font-weight:normal;">Alt+Shift+Ctrl+B</div>
<div class="t" style="left:396.5px;top:263.9px;font-size:15px;line-height:15px;color:#000000;font-weight:normal;">Photo Filter<span style="letter-spacing:-1.2px">...</span></div>
<div class="t" style="left:396.5px;top:286.7px;font-size:15px;line-height:15px;color:#000000;font-weight:normal;">Channel Mixer<span style="letter-spacing:-1.2px">...</span></div>
<div class="t" style="left:396.5px;top:310.2px;font-size:15px;line-height:15px;color:#000000;font-weight:normal;">Color Lookup<span style="letter-spacing:-1.2px">...</span></div>
<div class="r" style="left:378px;top:335px;width:270px;height:1px;background:#c4c4c4;"></div>
<div class="t" style="left:396.5px;top:343.8px;font-size:15px;line-height:15px;color:#000000;font-weight:normal;">Invert</div>
<div class="t" style="right:590px;top:343.8px;font-size:15px;line-height:15px;color:#000000;font-weight:normal;">Ctrl+I</div>
<div class="t" style="left:396.5px;top:366.9px;font-size:15px;line-height:15px;color:#000000;font-weight:normal;">Posterize<span style="letter-spacing:-1.2px">...</span></div>
<div class="t" style="left:396.5px;top:390.6px;font-size:15px;line-height:15px;color:#000000;font-weight:normal;">Threshold<span style="letter-spacing:-1.2px">...</span></div>
<div class="t" style="left:396.5px;top:412.8px;font-size:15px;line-height:15px;color:#000000;font-weight:normal;">Gradient Map<span style="letter-spacing:-1.2px">...</span></div>
<div class="r" style="left:377px;top:432px;width:272px;height:23px;background:#0078d7;"></div>
<div class="t" style="left:396.5px;top:436.7px;font-size:15px;line-height:15px;color:#ffffff;font-weight:normal;">Selective Color<span style="letter-spacing:-1.2px">...</span></div>
<div class="r" style="left:378px;top:461px;width:270px;height:1px;background:#c4c4c4;"></div>
<div class="t" style="left:396.5px;top:470.5px;font-size:15px;line-height:15px;color:#000000;font-weight:normal;">Shadows/Highlights<span style="letter-spacing:-1.2px">...</span></div>
<div class="t" style="left:396.5px;top:492.7px;font-size:15px;line-height:15px;color:#7d7d7d;font-weight:normal;">HDR Toning<span style="letter-spacing:-1.2px">...</span></div>
<div class="r" style="left:378px;top:516px;width:270px;height:1px;background:#c4c4c4;"></div>
<div class="t" style="left:396.5px;top:526.6px;font-size:15px;line-height:15px;color:#000000;font-weight:normal;">Desaturate</div>
<div class="t" style="right:590px;top:526.6px;font-size:15px;line-height:15px;color:#000000;font-weight:normal;">Shift+Ctrl+U</div>
<div class="t" style="left:396.5px;top:550.7px;font-size:15px;line-height:15px;color:#000000;font-weight:normal;">Match Color<span style="letter-spacing:-1.2px">...</span></div>
<div class="t" style="left:396.5px;top:572.3px;font-size:15px;line-height:15px;color:#000000;font-weight:normal;">Replace Color<span style="letter-spacing:-1.2px">...</span></div>
<div class="t" style="left:396.5px;top:596.9px;font-size:15px;line-height:15px;color:#000000;font-weight:normal;">Equalize<span style="letter-spacing:-1.2px">...</span></div>
</body></html>
